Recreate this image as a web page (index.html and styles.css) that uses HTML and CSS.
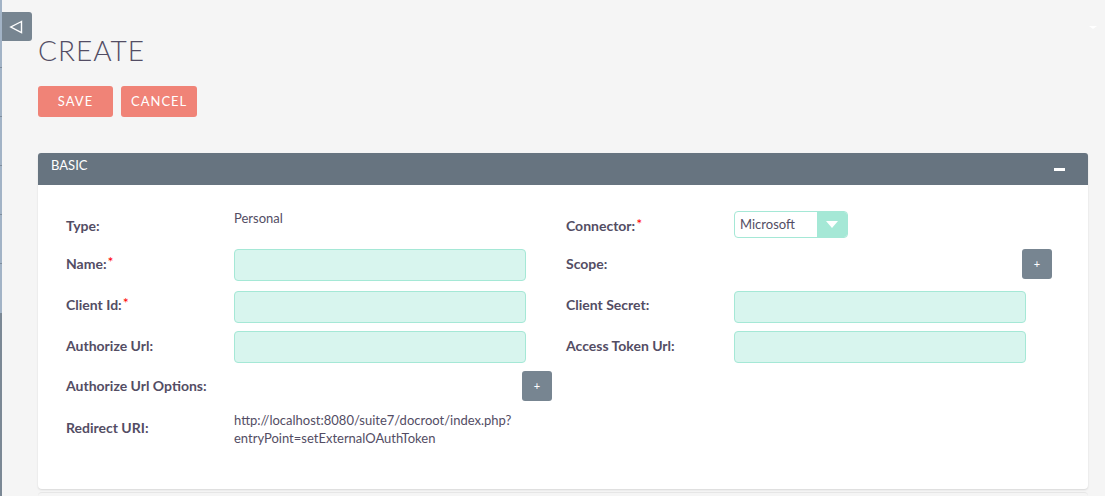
FILE: index.html
```html
<!DOCTYPE html>
<html>
<head>
<meta charset="utf-8">
<link rel="stylesheet" href="styles.css">
</head>
<body>
<div class="sidebar">
  <div class="nav">
    <div class="nav-item first"></div>
    <div class="nav-item"></div>
    <div class="nav-item"></div>
    <div class="nav-item"></div>
    <div class="nav-item"></div>
  </div>
</div>
<button class="toggle"><svg width="14" height="14" viewBox="0 0 14 14"><path d="M12.5 1.5 L1.8 7 L12.5 12.5 Z" fill="none" stroke="#fff" stroke-width="1.4" stroke-linejoin="miter"/></svg></button>
<div class="corner-tri"></div>
<main class="main">
  <h1 class="title">CREATE</h1>
  <div class="actions">
    <button class="btn">SAVE</button>
    <button class="btn">CANCEL</button>
  </div>
  <section class="panel">
    <div class="panel-head">
      <span class="panel-title">BASIC</span>
      <span class="minus"></span>
    </div>
    <div class="panel-body">
      <div class="row r1">
        <div class="half">
          <div class="label first">Type:</div>
          <div class="field"><span class="value up">Personal</span></div>
        </div>
        <div class="half">
          <div class="label first">Connector:<span class="req">*</span></div>
          <div class="field">
            <div class="select"><span class="sel-text">Microsoft</span><span class="sel-arrow"><svg width="12" height="8" viewBox="0 0 12 8"><path d="M0 0 H12 L6 7 Z" fill="#fff"/></svg></span></div>
          </div>
        </div>
      </div>
      <div class="row">
        <div class="half">
          <div class="label">Name:<span class="req">*</span></div>
          <div class="field"><div class="input"></div></div>
        </div>
        <div class="half">
          <div class="label">Scope:</div>
          <div class="field end"><button class="plus">+</button></div>
        </div>
      </div>
      <div class="row tall">
        <div class="half">
          <div class="label">Client Id:<span class="req">*</span></div>
          <div class="field"><div class="input"></div></div>
        </div>
        <div class="half">
          <div class="label">Client Secret:</div>
          <div class="field"><div class="input"></div></div>
        </div>
      </div>
      <div class="row">
        <div class="half">
          <div class="label">Authorize Url:</div>
          <div class="field"><div class="input"></div></div>
        </div>
        <div class="half">
          <div class="label">Access Token Url:</div>
          <div class="field"><div class="input"></div></div>
        </div>
      </div>
      <div class="row">
        <div class="half">
          <div class="label">Authorize Url Options:</div>
          <div class="field end"><button class="plus">+</button></div>
        </div>
      </div>
      <div class="row">
        <div class="half">
          <div class="label first">Redirect URI:</div>
          <div class="field"><span class="value url">http://localhost:8080/suite7/docroot/index.php?<br>entryPoint=setExternalOAuthToken</span></div>
        </div>
      </div>
    </div>
  </section>
  <div class="next-panel"></div>
</main>
</body>
</html>
```
FILE: styles.css
```css
* { box-sizing: border-box; }
html, body { margin: 0; padding: 0; }
body {
  background: #f5f5f5;
  font-family: Lato, "Open Sans", sans-serif;
  color: #534d64;
  display: flex;
  min-height: 496px;
  overflow: hidden;
}
.sidebar {
  width: 2px;
  flex: none;
  background: #7b8895;
}
.nav {
  height: 313px;
  background: #a2b3c6;
}
.nav-item {
  height: 49px;
  border-bottom: 1px solid #7f8e9e;
}
.nav-item.first { height: 68px; }
.toggle {
  position: absolute;
  left: 2px;
  top: 12px;
  width: 30px;
  height: 29px;
  padding: 0;
  border: none;
  background: #778591;
  border-radius: 0 3px 3px 0;
  display: flex;
  align-items: center;
  justify-content: center;
}
.toggle svg { display: block; margin-left: -2px; }
.corner-tri {
  position: absolute;
  left: 1089px;
  top: 26px;
  width: 0;
  height: 0;
  border-left: 4px solid transparent;
  border-right: 4px solid transparent;
  border-top: 3px solid #ffffff;
}
.main {
  flex: 1;
  padding: 33px 17px 0 36px;
}
.title {
  margin: 0;
  font-size: 28px;
  line-height: 34px;
  font-weight: 300;
  letter-spacing: 1px;
  color: #534d64;
}
.actions {
  display: flex;
  gap: 8px;
  margin-top: 19px;
}
.btn {
  height: 31px;
  min-width: 75px;
  padding: 0 10px 2px;
  border: none;
  border-radius: 3px;
  background: #f08377;
  color: #fff;
  font-family: Lato, sans-serif;
  font-size: 13px;
  letter-spacing: 1px;
  text-align: center;
}
.panel {
  margin-top: 36px;
  border-radius: 4px;
  box-shadow: 0 1px 2px rgba(0,0,0,0.12);
  background: #fff;
}
.panel-head {
  height: 32px;
  background: #677480;
  border-radius: 3px 3px 0 0;
  display: flex;
  align-items: flex-start;
  justify-content: space-between;
  padding: 4px 23px 0 13px;
}
.panel-title {
  color: #fff;
  font-size: 13px;
  line-height: 16px;
}
.minus {
  width: 11px;
  height: 3px;
  background: #fff;
  margin-top: 11px;
}
.panel-body {
  padding: 20px 0 42px 28px;
  border-radius: 0 0 4px 4px;
}
.row {
  display: flex;
  gap: 14px;
  height: 40px;
}
.row.tall { height: 42px; }
.row.tall .input { margin-top: 2px; }
.half {
  display: flex;
  align-items: center;
}
.label {
  width: 168px;
  font-size: 14px;
  font-weight: 700;
  color: #534d64;
  margin: -2px 0 2px;
}
.label.first { margin: 0; }
.req {
  color: #ff0000;
  font-weight: 400;
  vertical-align: 2px;
  font-size: 14px;
  margin-left: 1px;
  line-height: 1;
}
.field {
  width: 318px;
  display: flex;
  align-items: center;
}
.field.end { justify-content: flex-end; }
.value {
  font-size: 13px;
  color: #534d64;
  line-height: 18px;
}
.value.up { margin-top: -14px; }
.value.url { margin-top: 4px; }
.input {
  width: 292px;
  height: 32px;
  background: #d8f5ee;
  border: 1px solid #a5e8d6;
  border-radius: 4px;
}
.select {
  width: 114px;
  height: 27px;
  border: 1px solid #a5e8d6;
  border-radius: 4px;
  background: #fff;
  display: flex;
  margin-top: -1px;
  overflow: hidden;
}
.sel-text {
  flex: 1;
  font-size: 13px;
  line-height: 25px;
  padding-left: 5px;
  color: #534d64;
}
.sel-arrow {
  width: 30px;
  background: #a5e8d6;
  display: flex;
  align-items: center;
  justify-content: center;
}
.sel-arrow svg { display: block; }
.plus {
  width: 30px;
  height: 30px;
  padding: 0;
  border: none;
  border-radius: 3px;
  background: #778591;
  color: #fff;
  font-family: Lato, sans-serif;
  font-size: 11px;
  line-height: 30px;
  margin-top: -2px;
}
.next-panel {
  margin-top: 3px;
  height: 8px;
  border-top: 1px solid #e6e6e6;
  border-radius: 4px 4px 0 0;
}
```
